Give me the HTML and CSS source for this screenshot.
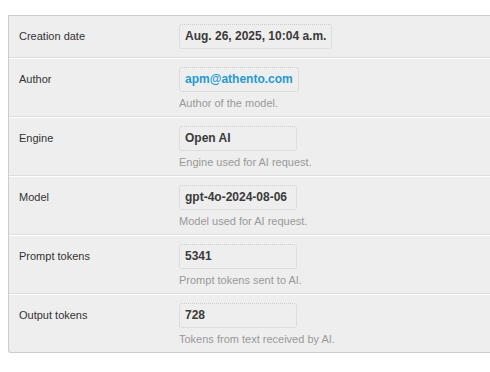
FILE: index.html
```html
<!DOCTYPE html>
<html lang="en">
<head>
<meta charset="utf-8">
<title>Model details</title>
<link rel="stylesheet" href="styles.css">
</head>
<body>
<div class="page">
  <div class="panel">
    <div class="row">
      <div class="label">Creation date</div>
      <div class="field">
        <span class="value">Aug. 26, 2025, 10:04 a.m.</span>
      </div>
    </div>
    <div class="row with-help">
      <div class="label">Author</div>
      <div class="field">
        <span class="value link">apm@athento.com</span>
        <div class="help">Author of the model.</div>
      </div>
    </div>
    <div class="row with-help">
      <div class="label">Engine</div>
      <div class="field">
        <span class="value">Open AI</span>
        <div class="help">Engine used for AI request.</div>
      </div>
    </div>
    <div class="row with-help">
      <div class="label">Model</div>
      <div class="field">
        <span class="value">gpt-4o-2024-08-06</span>
        <div class="help">Model used for AI request.</div>
      </div>
    </div>
    <div class="row with-help">
      <div class="label">Prompt tokens</div>
      <div class="field">
        <span class="value">5341</span>
        <div class="help">Prompt tokens sent to AI.</div>
      </div>
    </div>
    <div class="row with-help">
      <div class="label">Output tokens</div>
      <div class="field">
        <span class="value">728</span>
        <div class="help">Tokens from text received by AI.</div>
      </div>
    </div>
  </div>
</div>
</body>
</html>
```

FILE: styles.css
```css
body {
  margin: 0;
  background: #fff;
  font-family: "Liberation Sans", Arial, sans-serif;
  color: #333;
}

.page {
  padding: 15px 0 0 8px;
}

.panel {
  background: #eeeeee;
  border-top: 1px solid #cccccc;
  border-left: 1px solid #cccccc;
  border-bottom: 1px solid #cccccc;
  border-bottom-left-radius: 3px;
}

.row {
  display: flex;
  padding: 8px 10px 8px 10px;
  border-top: 1px solid #ffffff;
  border-bottom: 1px solid #dddddd;
}

.row:first-child {
  border-top: none;
}

.row:last-child {
  border-bottom: none;
}

.row.with-help {
  padding-bottom: 5px;
}

.label {
  width: 160px;
  flex: none;
  font-size: 11px;
  line-height: 25px;
  color: #333;
}

.field {
  display: flex;
  flex-direction: column;
  align-items: flex-start;
}

.value {
  display: inline-block;
  box-sizing: border-box;
  min-width: 118px;
  padding: 3px 5px;
  border: 1px dotted #cccccc;
  border-radius: 3px;
  font-size: 12px;
  font-weight: bold;
  line-height: 17px;
  color: #3a3a3a;
}

.value.link {
  color: #1e9bd7;
}

.help {
  margin-top: 4px;
  font-size: 11px;
  line-height: 15px;
  color: #999999;
}
```
